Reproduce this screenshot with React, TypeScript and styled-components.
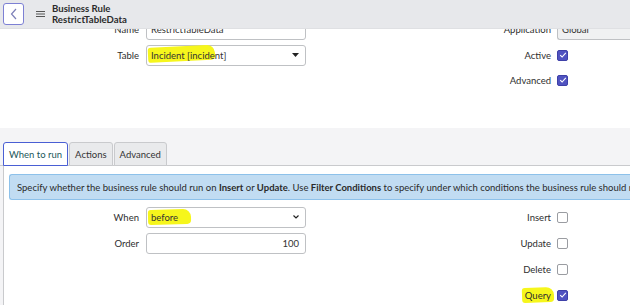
import React from 'react'
import styled, { createGlobalStyle } from 'styled-components'

const GlobalStyle = createGlobalStyle`
    body {
        margin: 0;
        font-family: Lato, 'Open Sans', sans-serif;
        font-size: 9.5px;
        color: #2e2e2e;
        background: #ffffff;
    }
`

const Page = styled.div`
    position: relative;
    width: 630px;
    height: 305px;
    overflow: hidden;
`

const Header = styled.div`
    position: absolute;
    top: 0;
    left: 0;
    right: 0;
    height: 28px;
    display: flex;
    align-items: center;
    background: #e7e8eb;
    border-bottom: 1px solid #dfe0e3;
    z-index: 2;
`

const BackButton = styled.button`
    width: 21px;
    height: 22px;
    margin-left: 3px;
    padding: 0;
    display: flex;
    align-items: center;
    justify-content: center;
    background: #ffffff;
    border: 1px solid #7d80d4;
    border-radius: 3px;
`

const MenuIcon = styled.div`
    margin-left: 12px;
    display: flex;
    align-items: center;
`

const HeaderTitle = styled.div`
    margin-left: 7px;
    font-weight: 700;
    font-size: 9.6px;
    line-height: 11px;
    color: #2b2b2b;
`

const Form = styled.div`
    padding-top: 18px;
`

const Row = styled.div<{ $h?: number }>`
    display: flex;
    align-items: center;
    height: ${(p) => p.$h ?? 24}px;
    margin-bottom: 2px;
`

const LeftLabel = styled.div`
    width: 139px;
    text-align: right;
    flex-shrink: 0;
`

const Half = styled.div`
    display: flex;
    align-items: center;
    width: 305px;
    flex-shrink: 0;
`

const RightLabel = styled.div`
    width: 246px;
    text-align: right;
    flex-shrink: 0;
    isolation: isolate;
`

const Field = styled.div<{ $align?: string; $bg?: string }>`
    box-sizing: border-box;
    margin-left: 7px;
    width: 160px;
    height: 21px;
    display: flex;
    align-items: center;
    justify-content: ${(p) => p.$align ?? 'space-between'};
    padding: 0 6px 0 4px;
    border: 1px solid #bfc1c4;
    border-radius: 3px;
    background: ${(p) => p.$bg ?? '#ffffff'};
    color: #333333;
    flex-shrink: 0;
    isolation: isolate;
`

const WideField = styled(Field)`
    margin-left: 6px;
    width: 90px;
    border-right: none;
    border-radius: 3px 0 0 3px;
`

// marker stroke drawn behind the text, slightly tilted like a hand highlight
const Highlight = styled.span<{ $extra?: number; $tilt?: number }>`
    position: relative;

    &::before {
        content: '';
        position: absolute;
        left: -3px;
        right: ${(p) => -(p.$extra ?? 3)}px;
        top: -2px;
        bottom: -2px;
        background: #f6f61c;
        border-radius: 3px 8px 4px 3px;
        transform: rotate(${(p) => p.$tilt ?? -1}deg);
        transform-origin: left center;
        z-index: -1;
    }
`

const Check = styled.div<{ $on?: boolean }>`
    box-sizing: border-box;
    margin-left: 6px;
    width: 11px;
    height: 11px;
    border-radius: 2px;
    border: 1px solid ${(p) => (p.$on ? '#3e40a8' : '#9a9ca1')};
    background: ${(p) => (p.$on ? '#5053c0' : '#ffffff')};
    display: flex;
    align-items: center;
    justify-content: center;
    position: relative;
`

const Section = styled.div`
    margin-top: 37px;
    background: #f4f4f6;
    padding-top: 14px;
`

const Tabs = styled.div`
    display: flex;
    padding-left: 3px;
    gap: 1px;
    border-bottom: 1px solid #c9cacd;
`

const Tab = styled.div<{ $active?: boolean }>`
    height: 22px;
    padding: 0 5px;
    display: flex;
    align-items: center;
    margin-bottom: -1px;
    border: 1px solid ${(p) => (p.$active ? '#4a5fd4' : '#c9cacd')};
    border-radius: 3px 3px 0 0;
    background: ${(p) => (p.$active ? '#ffffff' : '#e9eaec')};
    color: ${(p) => (p.$active ? '#21575a' : '#333333')};
`

const Panel = styled.div`
    margin-left: 3px;
    border-left: 1px solid #c9cacd;
    background: #ffffff;
    padding: 8px 0 0 5px;
    height: 200px;
`

const Info = styled.div`
    box-sizing: border-box;
    height: 26px;
    display: flex;
    align-items: center;
    padding-left: 7px;
    white-space: nowrap;
    overflow: hidden;
    background: #c1dcf2;
    border: 1px solid #8dc1ea;
    border-right: none;
    border-radius: 3px 0 0 3px;
    color: #2a2a2a;
    margin-bottom: 5px;
`

const PanelLeft = styled(LeftLabel)`
    width: 130px;
`

const PanelHalf = styled(Half)`
    width: 296px;
`

const Tick = () => (
    <svg width='8' height='8' viewBox='0 0 8 8'>
        <path d='M1.2 4.2 L3.1 6 L6.8 1.8' stroke='#ffffff' strokeWidth='1.1' fill='none' />
    </svg>
)

const App = () => {
    return (
        <Page>
            <GlobalStyle />
            <Header>
                <BackButton>
                    <svg width='8' height='12' viewBox='0 0 8 12'>
                        <path d='M6 1 L1.5 6 L6 11' stroke='#7c7fb8' strokeWidth='1.2' fill='none' />
                    </svg>
                </BackButton>
                <MenuIcon>
                    <svg width='9' height='8' viewBox='0 0 9 8'>
                        <path d='M0 1.5 H9 M0 4 H9 M0 6.5 H9' stroke='#555' strokeWidth='1.1' />
                    </svg>
                </MenuIcon>
                <HeaderTitle>
                    Business Rule
                    <br />
                    RestrictTableData
                </HeaderTitle>
            </Header>

            <Form>
                <Row $h={23}>
                    <Half>
                        <LeftLabel>Name</LeftLabel>
                        <Field $align='flex-start'>RestrictTableData</Field>
                    </Half>
                    <RightLabel>Application</RightLabel>
                    <WideField $align='flex-start' $bg='#f0f1f2'>Global</WideField>
                </Row>
                <Row>
                    <Half>
                        <LeftLabel>Table</LeftLabel>
                        <Field>
                            <span>
                                <Highlight $extra={30} $tilt={-3}>Incident</Highlight> [incident]
                            </span>
                            <svg width='7' height='4' viewBox='0 0 7 4'>
                                <path d='M0 0 H7 L3.5 4 Z' fill='#222' />
                            </svg>
                        </Field>
                    </Half>
                    <RightLabel>Active</RightLabel>
                    <Check $on>
                        <Tick />
                    </Check>
                </Row>
                <Row $h={22}>
                    <Half />
                    <RightLabel>Advanced</RightLabel>
                    <Check $on>
                        <Tick />
                    </Check>
                </Row>
            </Form>

            <Section>
                <Tabs>
                    <Tab $active>When to run</Tab>
                    <Tab>Actions</Tab>
                    <Tab>Advanced</Tab>
                </Tabs>
                <Panel>
                    <Info>
                        Specify whether the business rule should run on&nbsp;<b>Insert</b>&nbsp;or&nbsp;
                        <b>Update</b>. Use&nbsp;<b>Filter Conditions</b>&nbsp;to specify under which
                        conditions the business rule should run
                    </Info>
                    <Row $h={24}>
                        <PanelHalf>
                            <PanelLeft>When</PanelLeft>
                            <Field>
                                <Highlight $extra={13} $tilt={-1.5}>before</Highlight>
                                <svg width='6' height='4' viewBox='0 0 6 4'>
                                    <path d='M0.5 0.5 L3 3 L5.5 0.5' stroke='#222' strokeWidth='1.2' fill='none' />
                                </svg>
                            </Field>
                        </PanelHalf>
                        <RightLabel>Insert</RightLabel>
                        <Check />
                    </Row>
                    <Row $h={24}>
                        <PanelHalf>
                            <PanelLeft>Order</PanelLeft>
                            <Field $align='flex-end'>100</Field>
                        </PanelHalf>
                        <RightLabel>Update</RightLabel>
                        <Check />
                    </Row>
                    <Row $h={24}>
                        <PanelHalf />
                        <RightLabel>Delete</RightLabel>
                        <Check />
                    </Row>
                    <Row $h={24}>
                        <PanelHalf />
                        <RightLabel>
                            <Highlight $extra={3} $tilt={-2}>Query</Highlight>
                        </RightLabel>
                        <Check $on>
                            <Tick />
                        </Check>
                    </Row>
                </Panel>
            </Section>
        </Page>
    )
}

export default App
